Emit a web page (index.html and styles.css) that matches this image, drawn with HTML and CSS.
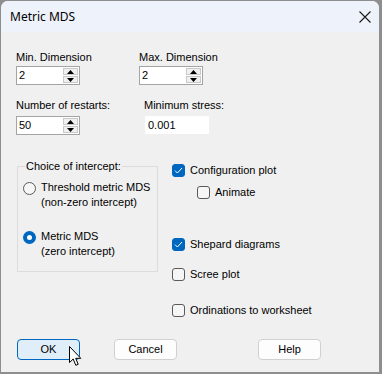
FILE: index.html
```html
<!DOCTYPE html>
<html>
<head>
<meta charset="utf-8">
<link rel="stylesheet" href="styles.css">
</head>
<body>
<div class="window">
  <div class="titlebar">
    <span class="title">Metric MDS</span>
    <svg class="close" width="12" height="12" viewBox="0 0 12 12"><path d="M0.5 0.5 L11.5 11.5 M11.5 0.5 L0.5 11.5" stroke="#1a1a1a" stroke-width="1.1" fill="none"/></svg>
  </div>
  <div class="content">
    <div class="fields">
      <div class="field">
        <div class="label">Min. Dimension</div>
        <div class="spin"><span class="val">2</span><div class="btns"><div class="sb"><svg width="7" height="4" viewBox="0 0 7 4"><path d="M3.5 0 L7 4 L0 4 Z" fill="#000"/></svg></div><div class="sb"><svg width="7" height="4" viewBox="0 0 7 4"><path d="M0 0 L7 0 L3.5 4 Z" fill="#000"/></svg></div></div></div>
      </div>
      <div class="field">
        <div class="label">Max. Dimension</div>
        <div class="spin"><span class="val">2</span><div class="btns"><div class="sb"><svg width="7" height="4" viewBox="0 0 7 4"><path d="M3.5 0 L7 4 L0 4 Z" fill="#000"/></svg></div><div class="sb"><svg width="7" height="4" viewBox="0 0 7 4"><path d="M0 0 L7 0 L3.5 4 Z" fill="#000"/></svg></div></div></div>
      </div>
      <div class="field row2">
        <div class="label">Number of restarts:</div>
        <div class="spin"><span class="val">50</span><div class="btns"><div class="sb"><svg width="7" height="4" viewBox="0 0 7 4"><path d="M3.5 0 L7 4 L0 4 Z" fill="#000"/></svg></div><div class="sb"><svg width="7" height="4" viewBox="0 0 7 4"><path d="M0 0 L7 0 L3.5 4 Z" fill="#000"/></svg></div></div></div>
      </div>
      <div class="field row2 shift">
        <div class="label">Minimum stress:</div>
        <div class="textbox">0.001</div>
      </div>
    </div>

    <div class="middle">
      <div class="group">
        <div class="legend"><span>Choice of intercept:</span></div>
        <div class="radio">
          <span class="rb"></span>
          <span class="rtext">Threshold metric MDS<br>(non-zero intercept)</span>
        </div>
        <div class="radio second">
          <span class="rb on"></span>
          <span class="rtext">Metric MDS<br>(zero intercept)</span>
        </div>
      </div>
      <div class="checks">
        <div class="check"><span class="cb on"><svg width="9" height="7" viewBox="0 0 9 7"><path d="M1 3.6 L3.4 6 L8 1" stroke="#fff" stroke-width="1" fill="none"/></svg></span>Configuration plot</div>
        <div class="check sub"><span class="cb"></span>Animate</div>
        <div class="check shep"><span class="cb on"><svg width="9" height="7" viewBox="0 0 9 7"><path d="M1 3.6 L3.4 6 L8 1" stroke="#fff" stroke-width="1" fill="none"/></svg></span>Shepard diagrams</div>
        <div class="check scree"><span class="cb"></span>Scree plot</div>
        <div class="check ord"><span class="cb"></span>Ordinations to worksheet</div>
      </div>
    </div>

    <div class="buttons">
      <div class="btn default">OK</div>
      <div class="btn cancel">Cancel</div>
      <div class="btn help">Help</div>
    </div>
  </div>
  <svg class="cursor" width="13" height="21" viewBox="0 0 13 21"><path d="M0.5 0.5 L0.5 16.5 L4.2 13 L6.8 19.3 L9.2 18.3 L6.7 12.3 L11.8 12.3 Z" fill="#fff" stroke="#000" stroke-width="1" stroke-linejoin="miter"/></svg>
</div>
</body>
</html>
```
FILE: styles.css
```css
* { box-sizing: border-box; }
html, body { margin: 0; padding: 0; }
body {
  width: 382px;
  height: 374px;
  background: #8e8e8e;
  font-family: "Liberation Sans", Arial, sans-serif;
  font-size: 11px;
  color: #000;
  overflow: hidden;
  padding: 1px 3px 2px 1px;
}
.window {
  position: relative;
  width: 378px;
  height: 371px;
  background: #f0f0f0;
  border-radius: 7px 7px 0 0;
  overflow: hidden;
  display: flex;
  flex-direction: column;
}
.titlebar {
  height: 31px;
  flex: none;
  background: #eef2fa;
  display: flex;
  align-items: center;
  justify-content: space-between;
  padding: 0 7px 0 9px;
}
.title { font-family: "Noto Sans", "Open Sans", sans-serif; font-size: 12px; }
.close { margin-right: 1px; margin-top: 1px; }
.content {
  flex: 1;
  display: flex;
  flex-direction: column;
  padding: 18px 0 12px 15px;
}
.fields {
  display: grid;
  grid-template-columns: 123px 120px;
}
.label { height: 16px; line-height: 14px; }
.row2 { margin-top: 13px; }
.row2 .label { height: 18px; }
.spin {
  width: 64px;
  height: 19px;
  background: #fff;
  border: 1px solid #a4a4a4;
  display: flex;
  justify-content: space-between;
  align-items: stretch;
  padding: 1px;
}
.val { padding-left: 1px; line-height: 15px; }
.btns { width: 15px; display: flex; flex-direction: column; gap: 1px; }
.sb {
  flex: 1;
  background: #f0f0f0;
  border: 1px solid #c9c9c9;
  display: flex;
  align-items: center;
  justify-content: center;
}
.shift { padding-left: 5px; }
.textbox {
  width: 64px;
  height: 18px;
  background: #fff;
  padding: 2px 0 0 3px;
  line-height: 14px;
  margin-left: 1px;
}
.middle { display: flex; margin-top: 24px; }
.group {
  margin: 7px 0 0 1px;
  width: 141px;
  height: 106px;
  border: 1px solid #dcdcdc;
  padding: 0 0 0 5px;
  flex: none;
}
.legend { margin: -8px 0 8px 2px; line-height: 14px; height: 14px; }
.legend span { background: #f0f0f0; padding: 0 1px; }
.radio { display: flex; align-items: flex-start; }
.rb {
  width: 13px; height: 13px;
  border-radius: 50%;
  border: 1px solid #5a5a5a;
  background: #f6f6f6;
  margin-top: 1px;
  flex: none;
}
.rb.on { border: none; background: #0067c0; position: relative; }
.rb.on::after {
  content: ""; position: absolute; left: 4px; top: 4px; width: 5px; height: 5px; border-radius: 50%; background: #fff;
}
.rtext { margin-left: 5px; line-height: 15px; margin-top: -1px; }
.radio.second { margin-top: 20px; }
.checks { margin-left: 14px; margin-top: 4px; }
.check { display: flex; align-items: center; height: 14px; line-height: 14px; }
.cb {
  width: 13px; height: 13px;
  border: 1px solid #5a5a5a;
  border-radius: 3px;
  background: #f6f6f6;
  margin-right: 5px;
  flex: none;
  display: flex; align-items: center; justify-content: center;
}
.cb.on { background: #0067c0; border-color: #0067c0; }
.check.sub { margin-left: 25px; margin-top: 8px; }
.check.shep { margin-top: 38px; }
.check.scree { margin-top: 16px; }
.check.ord { margin-top: 22px; }
.buttons { display: flex; margin-top: auto; margin-left: 1px; }
.btn {
  width: 63px; height: 21px;
  border: 1px solid #d0d0d0;
  border-radius: 4px;
  background: #fdfdfd;
  text-align: center;
  line-height: 19px;
}
.btn.default { background: #e0eef9; border-color: #0067c0; }
.btn.cancel { margin-left: 34px; }
.btn.help { margin-left: 81px; }
.cursor { position: absolute; left: 68px; top: 345px; }
```
